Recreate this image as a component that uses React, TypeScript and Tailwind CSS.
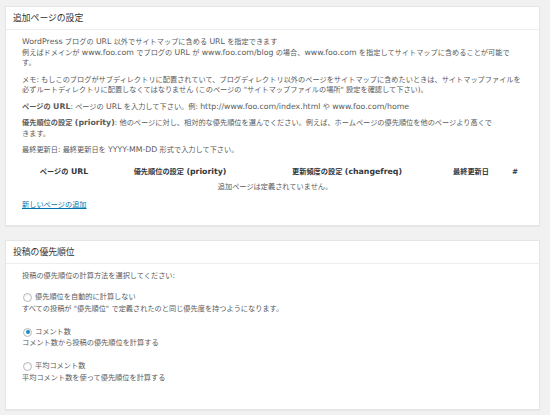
import React from 'react';

// latin runs are set a touch larger than the CJK text, like the original's font pairing
function L({ children }: { children: React.ReactNode }) {
  return <span className="text-[7.8px]">{children}</span>;
}

function Radio({ checked }: { checked?: boolean }) {
  return (
    <span className="inline-flex w-[9px] h-[9px] rounded-full border border-[#b4b9be] bg-white items-center justify-center shadow-[inset_0_1px_2px_rgba(0,0,0,0.07)] mr-[3px]">
      {checked && <span className="w-[4px] h-[4px] rounded-full bg-[#1e8cbe]" />}
    </span>
  );
}

function Panel({ title, children }: { title: string; children: React.ReactNode }) {
  return (
    <div className="bg-white border border-[#e5e5e5] shadow-[0_1px_1px_rgba(0,0,0,0.04)]">
      <div className="h-[23px] px-[7px] flex items-center border-b border-[#eee] text-[8.8px] text-[#333]">
        {title}
      </div>
      {children}
    </div>
  );
}

export default function App() {
  return (
    <div className="w-[550px] h-[415px] bg-[#f1f1f1] pt-[6px] pl-[5px] pr-[10px] font-['DejaVu_Sans','Noto_Sans_CJK_JP',sans-serif] text-[7.2px] leading-[10.5px] text-[#5a5a5a]">
      <Panel title="追加ページの設定">
        <div className="px-[16px] pt-[7px] pb-[15px] whitespace-nowrap">
          <p>
            <L>WordPress</L> ブログの <L>URL</L> 以外でサイトマップに含める <L>URL</L> を指定できます
            <br />
            例えばドメインが <L>www.foo.com</L> でブログの <L>URL</L> が <L>www.foo.com/blog</L> の場合、<L>www.foo.com</L> を指定してサイトマップに含めることが可能で
            <br />
            す。
          </p>
          <p className="mt-[6px]">
            メモ: もしこのブログがサブディレクトリに配置されていて、ブログディレクトリ以外のページをサイトマップに含めたいときは、サイトマップファイルを
            <br />
            必ずルートディレクトリに配置しなくてはなりません (このページの "サイトマップファイルの場所" 設定を確認して下さい)。
          </p>
          <p className="mt-[6px]">
            <b className="font-semibold">ページの <L>URL</L></b>: ページの <L>URL</L> を入力して下さい。例: <L>http://www.foo.com/index.html</L> や <L>www.foo.com/home</L>
          </p>
          <p className="mt-[6px]">
            <b className="font-semibold">優先順位の設定 <L>(priority)</L></b>: 他のページに対し、相対的な優先順位を選んでください。例えば、ホームページの優先順位を他のページより高くで
            <br />
            きます。
          </p>
          <p className="mt-[6px]">最終更新日: 最終更新日を <L>YYYY-MM-DD</L> 形式で入力して下さい。</p>

          <table className="mt-[9px] w-[506px] border-collapse">
            <thead>
              <tr className="h-[15px] text-[#32373c]">
                <th className="w-[84px] font-semibold">ページの <L>URL</L></th>
                <th className="w-[148px] font-semibold">優先順位の設定 <L>(priority)</L></th>
                <th className="w-[186px] font-semibold">更新頻度の設定 <L>(changefreq)</L></th>
                <th className="w-[62px] font-semibold">最終更新日</th>
                <th className="w-[26px] font-semibold">#</th>
              </tr>
            </thead>
            <tbody>
              <tr className="h-[15px]">
                <td colSpan={5} className="text-center">
                  追加ページは定義されていません。
                </td>
              </tr>
            </tbody>
          </table>

          <a href="#" className="block mt-[5px] w-fit text-[#0073aa] underline">
            新しいページの追加
          </a>
        </div>
      </Panel>

      <div className="mt-[14px]">
        <Panel title="投稿の優先順位">
          <div className="px-[16px] pt-[7px] pb-[26px] whitespace-nowrap">
            <p>投稿の優先順位の計算方法を選択してください:</p>
            <div className="mt-[10px]">
              <label className="flex items-center h-[12px] pl-[1px]">
                <Radio />
                優先順位を自動的に計算しない
              </label>
              <p>すべての投稿が "優先順位" で定義されたのと同じ優先度を持つようになります。</p>
            </div>
            <div className="mt-[12px]">
              <label className="flex items-center h-[12px] pl-[1px]">
                <Radio checked />
                コメント数
              </label>
              <p>コメント数から投稿の優先順位を計算する</p>
            </div>
            <div className="mt-[12px]">
              <label className="flex items-center h-[12px] pl-[1px]">
                <Radio />
                平均コメント数
              </label>
              <p>平均コメント数を使って優先順位を計算する</p>
            </div>
          </div>
        </Panel>
      </div>
    </div>
  );
}
